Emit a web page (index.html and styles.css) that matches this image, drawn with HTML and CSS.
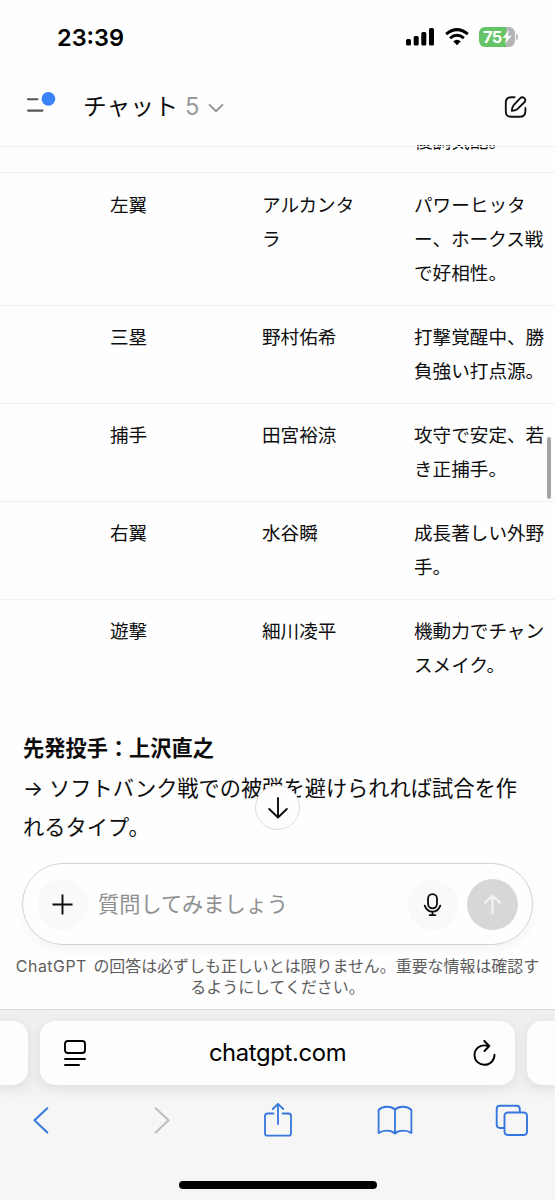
FILE: index.html
```html
<!DOCTYPE html>
<html lang="ja">
<head>
<meta charset="utf-8">
<title>ChatGPT</title>
<link rel="stylesheet" href="styles.css">
</head>
<body>
<div class="phone">
  <div class="status">
    <span class="time">23:39</span>
    <div class="status-icons">
      <svg class="signal" width="28" height="18" viewBox="0 0 28 18"><rect x="0" y="11" width="5" height="6.5" rx="1.5"/><rect x="7.7" y="8" width="5" height="9.5" rx="1.5"/><rect x="15.3" y="4" width="5" height="13.5" rx="1.5"/><rect x="23" y="0" width="5" height="17.5" rx="1.5"/></svg>
      <svg class="wifi" width="24" height="18" viewBox="0 0 24 18"><g fill="none" stroke="#000" stroke-width="3"><path d="M1.2 6.1Q12-2.9 22.8 6.1"/><path d="M5.1 10.1Q12 4.3 18.9 10.1"/></g><path d="M8.2 13.3Q12 10.3 15.8 13.3L12 17.3Z"/></svg>
      <div class="battery"><span class="level">75</span><svg class="bolt" width="10" height="14" viewBox="0 0 10 14"><path d="M7 0L0.5 8H4.3L2.5 14L9.7 5.7H5.8Z" fill="#fff"/></svg></div>
      <i class="battery-tip"></i>
    </div>
  </div>

  <header class="header">
    <div class="menu"><svg width="30" height="30" viewBox="0 0 30 30"><path d="M2 16.2H11.500M2 27.600H16.500" stroke="#555" stroke-width="2.1" stroke-linecap="round"/><circle cx="22.4" cy="15.800" r="6.9" fill="#3b82f6"/></svg></div>
    <div class="title">チャット<span class="version">5</span></div>
    <svg class="chevron" width="16" height="10" viewBox="0 0 16 10"><path d="M1 1.4L8 8.2L15 1.4" fill="none" stroke="#8f8f8f" stroke-width="1.8"/></svg>
    <svg class="compose" width="24" height="24" viewBox="0 0 24 24" fill="none" stroke="#111" stroke-width="1.9" stroke-linecap="round" stroke-linejoin="round"><path d="M10.6 2.2H7.4C3.3 2.2 1.8 3.8 1.8 7.6V16.2C1.8 20.5 3.6 21.8 7.6 21.8H15.5C19.6 21.8 21.4 20.4 21.4 16.2V13"/><path d="M16 3.4C18.9.5 23.2 4.3 20.4 7.3L13.3 14.1C11.9 15.3 10.2 15.8 7.8 15.8C7.9 13.5 8.3 11.6 9.7 10.1Z"/></svg>
  </header>

  <main class="content">
    <div class="table">
      <div class="row"><span></span><span></span><span>復調気配。</span></div>
      <div class="row"><span>左翼</span><span>アルカンタ<br>ラ</span><span>パワーヒッタ<br>ー、ホークス戦<br>で好相性。</span></div>
      <div class="row"><span>三塁</span><span>野村佑希</span><span>打撃覚醒中、勝<br>負強い打点源。</span></div>
      <div class="row"><span>捕手</span><span>田宮裕涼</span><span>攻守で安定、若<br>き正捕手。</span></div>
      <div class="row"><span>右翼</span><span>水谷瞬</span><span>成長著しい外野<br>手。</span></div>
      <div class="row"><span>遊撃</span><span>細川凌平</span><span>機動力でチャン<br>スメイク。</span></div>
    </div>
    <p class="note"><strong>先発投手：上沢直之</strong><br><span class="arrow">→</span>ソフトバンク戦での被弾を避けられれば試合を作<br>れるタイプ。</p>
    <i class="scrollbar"></i>
    <div class="to-bottom"><svg width="20" height="22" viewBox="0 0 20 22"><path d="M10 1V20.5M1.2 12L10 20.5L18.8 12" fill="none" stroke="#0d0d0d" stroke-width="1.9" stroke-linecap="round" stroke-linejoin="round"/></svg></div>
  </main>

  <section class="composer-area">
    <div class="composer">
      <div class="round soft"><svg width="21" height="21" viewBox="0 0 21 21"><path d="M10.500 .5V20.500M.5 10.500H20.500" stroke="#0d0d0d" stroke-width="1.9"/></svg></div>
      <span class="placeholder">質問してみましょう</span>
      <div class="round soft mic"><svg width="19" height="25" viewBox="0 0 20 25" fill="none" stroke="#0d0d0d" stroke-width="1.9" stroke-linecap="round"><rect x="5.3" y="1.5" width="9.4" height="15" rx="4.7"/><path d="M1.8 13.7C5 22.2 15 22.2 18.2 13.7M10 20.2V23.6M7 23.7H13"/></svg></div>
      <div class="round send"><svg width="19" height="21" viewBox="0 0 18 20"><path d="M9 19V1.8M1.3 9L9 1.6L16.7 9" fill="none" stroke="#f3f3f3" stroke-width="2.2"/></svg></div>
    </div>
    <p class="disclaimer"><span class="brand">ChatGPT</span> の回答は必ずしも正しいとは限りません。重要な情報は確認す<br>るようにしてください。</p>
  </section>

  <footer class="browser">
    <div class="tabs">
      <div class="tab tab-prev"></div>
      <div class="tab tab-current">
        <svg width="22" height="27" viewBox="0 0 22 27" fill="none" stroke="#000" stroke-width="1.9" stroke-linecap="round"><rect x="1" y="1" width="20" height="12" rx="2.7"/><path d="M1 19H21M1 25H15"/></svg>
        <span class="url">chatgpt.com</span>
        <svg width="23" height="27" viewBox="0 0 23 27" fill="none" stroke="#000" stroke-width="1.9" stroke-linecap="round" stroke-linejoin="round"><path d="M14.700 5.900C7.500 3.700 1.4 8.700 1.5 15.200C1.6 20.800 6.100 24.800 11.500 24.800C17 24.800 21.5 20.600 21.5 14.800M11.300 1L16.300 6L11.5 11"/></svg>
      </div>
      <div class="tab tab-next"></div>
    </div>
    <nav class="toolbar">
      <svg width="30" height="36" viewBox="0 0 30 36"><path d="M21.3 6.2L8.5 18.2L21.3 30.5" fill="none" stroke="#3576df" stroke-width="2" stroke-linecap="round" stroke-linejoin="round"/></svg>
      <svg class="forward" width="30" height="36" viewBox="0 0 30 36"><path d="M8.7 6.2L21.5 18.2L8.7 30.5" fill="none" stroke="#bdbdbd" stroke-width="2" stroke-linecap="round" stroke-linejoin="round"/></svg>
      <svg class="share" width="30" height="36" viewBox="0 0 30 36" fill="none" stroke="#3576df" stroke-width="1.8" stroke-linecap="round" stroke-linejoin="round"><path d="M10.5 11.5H4.5Q2 11.5 2 14V31.2Q2 33.7 4.5 33.7H25.5Q28 33.7 28 31.2V14Q28 11.5 25.5 11.5H19.5M15 22V2M9.8 7L15 1.8L20.2 7"/></svg>
      <svg class="book" width="36" height="36" viewBox="0 0 36 36" fill="none" stroke="#3576df" stroke-width="1.8" stroke-linejoin="round"><path d="M18 7.5C14 3.5 5.5 4 1.6 8V31C6 28 14 27.5 18 31.5C22 27.5 30 28 34.4 31V8C30.500 4 22 3.500 18 7.500V31.500"/></svg>
      <svg class="windows" width="34" height="36" viewBox="0 0 34 36" fill="none" stroke="#3576df" stroke-width="1.9" stroke-linecap="round"><rect x="9.500" y="10.500" width="22.500" height="22.500" rx="3.300"/><path d="M8.500 26H5Q1.700 26 1.700 22.700V7Q1.700 3.700 5 3.700H21.500Q24.800 3.700 24.800 7V9.500"/></svg>
    </nav>
    <div class="home-indicator"></div>
  </footer>
</div>
</body>
</html>
```
FILE: styles.css
```css
* { box-sizing: border-box; }
body {
  margin: 0;
  background: #fefefe;
  color: #0d0d0d;
  font-family: Inter, "Noto Sans CJK JP", sans-serif;
}
svg { display: block; flex: none; }
p { margin: 0; }
.phone {
  width: 555px;
  height: 1200px;
  display: flex;
  flex-direction: column;
  overflow: hidden;
}
.status {
  height: 74px;
  flex: none;
  display: flex;
  align-items: center;
  justify-content: space-between;
  padding: 0 37px 0 57px;
}
.time { font-size: 23.500px; font-weight: 600; line-height: 30px; color: #000; padding-top: 1px; }
.status-icons { display: flex; align-items: center; }
.wifi { margin-left: 11px; }
.battery {
  width: 36px;
  height: 20px;
  margin-left: 10px;
  border-radius: 6px;
  background: linear-gradient(90deg, #65c466 75%, #b5b5b5 75%);
  display: flex;
  align-items: center;
  padding-left: 4px;
}
.level { font-size: 16.500px; font-weight: 700; line-height: 20px; color: #fff; letter-spacing: -0.6px; }
.battery-tip { width: 2px; height: 6px; margin-left: 1px; border-radius: 0 2px 2px 0; background: #bbb; }
.header {
  height: 71px;
  flex: none;
  position: relative;
  z-index: 1;
  display: flex;
  align-items: center;
  padding: 0 27px 6px 26px;
}
.header::after {
  content: "";
  position: absolute;
  left: 0;
  right: 0;
  top: 72px;
  height: 1px;
  background: #efefef;
}
.menu { height: 30px; width: 57px; margin-top: -17px; }
.title { font-size: 23.800px; line-height: 36px; white-space: nowrap; }
.version { margin-left: 7px; color: #999; }
.chevron { margin: 2px 0 0 9px; }
.compose { margin-left: auto; }
.content {
  height: 710px;
  flex: none;
  position: relative;
  overflow: hidden;
}
.table { margin-top: -21px; font-size: 18.600px; line-height: 34.200px; }
.row {
  display: grid;
  grid-template-columns: 152px 152px 141px;
  padding: 14.400px 0 14.200px 110px;
  border-bottom: 1.500px solid #f0f0f0;
  white-space: nowrap;
}
.row:first-child { padding-top: 0; }
.row:last-child { border: 0; }
.note {
  margin-top: 32.500px;
  padding-left: 23px;
  font-size: 21.230px;
  line-height: 39.600px;
  white-space: nowrap;
}
.arrow { display: inline-block; width: 26px; }
.scrollbar {
  position: absolute;
  right: 4px;
  top: 292px;
  width: 4.500px;
  height: 62px;
  border-radius: 3px;
  background: #a5a5a5;
}
.to-bottom {
  position: absolute;
  left: 255px;
  top: 640px;
  width: 45px;
  height: 45px;
  border: 1px solid #dedede;
  border-radius: 50%;
  background: #fefefe;
  display: grid;
  place-items: center;
}
.composer-area { height: 154px; flex: none; padding: 8px 0 0; }
.composer {
  width: 511px;
  height: 82px;
  margin-left: 22px;
  border: 1px solid #d2d2d2;
  border-radius: 41px;
  box-shadow: 0 5px 10px rgba(0, 0, 0, .04);
  display: flex;
  align-items: center;
  padding: 0 14px;
}
.round { width: 51px; height: 51px; border-radius: 50%; display: grid; place-items: center; flex: none; }
.soft { background: #f9f9f9; }
.placeholder { margin-left: 10px; font-size: 21.200px; line-height: 32px; color: #8f8f8f; }
.mic { margin-left: auto; }
.send { margin-left: 9px; background: #d7d7d7; }
.disclaimer {
  margin-top: 11px;
  font-size: 15.950px;
  line-height: 21.200px;
  text-align: center;
  white-space: nowrap;
  color: #5d5d5d;
}
.brand { letter-spacing: .5px; margin-right: 2px; }
.browser {
  height: 191px;
  flex: none;
  border-top: 1.500px solid #d9d9d9;
  background: linear-gradient(#efefef 0, #f0f0f0 75px, #f6f6f6 95px);
  padding-top: 11px;
}
.tabs { height: 64px; display: flex; gap: 12px; }
.tab { background: #fdfdfd; box-shadow: 0 3px 12px rgba(0, 0, 0, .08); }
.tab-prev { width: 28px; border-radius: 0 15px 15px 0; }
.tab-next { width: 28px; border-radius: 15px 0 0 15px; }
.tab-current {
  width: 475px;
  border-radius: 15px;
  display: flex;
  align-items: center;
  justify-content: space-between;
  padding: 0 19px 0 24px;
}
.url { margin-right: 4px; font-size: 23.800px; line-height: 30px; color: #000; letter-spacing: -0.35px; }
.toolbar {
  height: 36px;
  margin-top: 17px;
  display: flex;
  padding: 0 26px;
}
.forward { margin-left: 91px; }
.share { margin-left: 86px; }
.book { margin-left: 84px; }
.windows { margin-left: auto; }
.home-indicator { width: 198px; height: 7.500px; margin: 43px auto 0; border-radius: 4px; background: #000; }
```
